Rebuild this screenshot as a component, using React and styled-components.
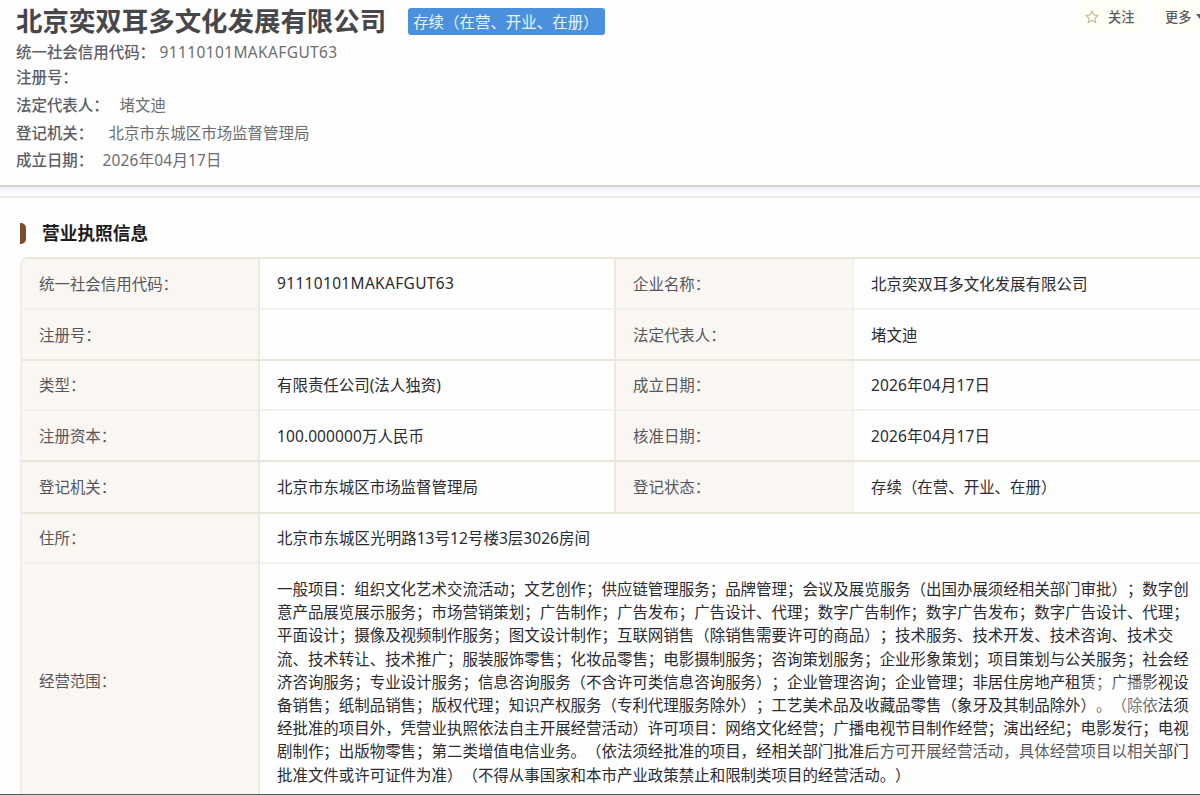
import React from "react";
import styled, { createGlobalStyle } from "styled-components";

const GlobalStyle = createGlobalStyle`
  * {
    box-sizing: border-box;
  }

  body {
    margin: 0;
    background: #fefefe;
    font-family: "Noto Sans", "Noto Sans CJK SC", sans-serif;
    font-size: 15.46px;
    color: #33343c;
    text-spacing-trim: space-all;
    overflow: hidden;
  }
`;

const Page = styled.div`
  position: relative;
  width: 1200px;
  height: 795px;
  overflow: hidden;
  border-bottom: 1px solid #58585a;
`;

const Header = styled.header`
  display: flex;
  justify-content: space-between;
  height: 187px;
  padding-left: 16px;
  border-bottom: 2px solid #d3d4cb;
`;

const TitleRow = styled.div`
  display: flex;
  align-items: center;
  height: 39px;
  padding-top: 3px;
`;

const Title = styled.h1`
  margin: 0;
  font-size: 26.45px;
  line-height: 36px;
  font-weight: 700;
  color: #47474b;
  white-space: nowrap;
`;

const Status = styled.span`
  height: 27px;
  width: 197px;
  margin-left: 21.5px;
  padding-left: 5.5px;
  border-radius: 3px;
  background: #4a90dc;
  color: #e9f8ff;
  line-height: 28px;
  white-space: nowrap;
`;

const Meta = styled.div`
  display: flex;
  height: ${(props) => props.$height}px;
  line-height: ${(props) => props.$height}px;
  color: #6c6d73;
`;

const MetaLabel = styled.span`
  width: ${(props) => props.$width}px;
  font-weight: 500;
  color: #5d5e69;
  white-space: nowrap;
`;

const Latin = styled.span`
  letter-spacing: ${(props) => props.$spacing}px;
`;

const Actions = styled.div`
  display: flex;
  height: 31px;
  font-size: 13.2px;
  font-weight: 500;
  color: #5b5a62;
  gap: 10px;
`;

const Action = styled.div`
  display: flex;
  align-items: center;
  gap: ${(props) => props.$gap}px;
  width: ${(props) => props.$width}px;
  padding: 2px 0 0 ${(props) => props.$left}px;
  background: #fffef6;
  white-space: nowrap;
  overflow: hidden;

  svg {
    flex: none;
  }
`;

const Divider = styled.div`
  height: 11px;
  background: linear-gradient(#f0f0f4, #fbfbfe 60%);
  border-bottom: 2px solid #ecece2;
`;

const Section = styled.section`
  padding: 25px 0 0 20px;
`;

const SectionTitle = styled.h2`
  display: flex;
  align-items: center;
  gap: 16px;
  margin: 0 0 13px;
  height: 21px;
  font-size: 17.7px;
  line-height: 21px;
  font-weight: 700;
  color: #1d1c1f;

  &::before {
    content: "";
    width: 6px;
    height: 21px;
    border-radius: 0 5px 5px 0;
    background: #7b4e30;
  }
`;

const Table = styled.div`
  display: grid;
  grid-template-columns: 238px 356px 238px 1fr;
  grid-template-rows: 51px 51px 50px 51px 52px 50px 240px;
  border-top: 2px solid #ebe7d9;
  border-left: 2px solid #f0eee6;
  border-top-left-radius: 8px;
  overflow: hidden;
`;

const Cell = styled.div`
  display: flex;
  align-items: center;
  padding: 0 0 1px 17px;
  border-bottom: ${(props) =>
    props.$faint ? "2px solid #f2f1eb" : "2px solid #e9e5d7"};
  white-space: nowrap;
`;

const Label = styled(Cell)`
  border-right: ${(props) =>
    props.$second ? "1px solid #edebe2" : "2px solid #ebe8dc"};
  background: #faf7f2;
  color: #56565e;
`;

const ScopeLabel = styled(Label)`
  padding-bottom: 5px;
`;

const Value = styled(Cell)`
  grid-column: ${(props) => (props.$wide ? "span 3" : "auto")};
  border-right: ${(props) => (props.$divided ? "2px solid #ebe8dc" : "none")};
  padding-left: 17px;
  color: #2a2b33;
`;

const Scope = styled(Value)`
  display: block;
  padding-top: 14px;
  line-height: 23.2px;
`;

// washed-out patches lying over the scope text
const Haze = styled.div`
  position: absolute;
  left: ${(props) => props.$left}px;
  top: ${(props) => props.$top}px;
  width: ${(props) => props.$width}px;
  height: ${(props) => props.$height}px;
  border-radius: 12px;
  background: rgba(255, 255, 255, ${(props) => props.$alpha});
  filter: blur(3px);
  pointer-events: none;
`;

const meta = [
  { label: "统一社会信用代码：", value: "91110101MAKAFGUT63", width: 143.5, height: 26, spacing: 0.4 },
  { label: "注册号：", value: "", width: 80, height: 25 },
  { label: "法定代表人：", value: "堵文迪", width: 103.5, height: 30 },
  { label: "登记机关：", value: "北京市东城区市场监督管理局", width: 92.5, height: 26 },
  { label: "成立日期：", value: "2026年04月17日", width: 86.5, height: 28, spacing: 0.2 },
];

const rows = [
  ["统一社会信用代码：", "91110101MAKAFGUT63", "企业名称：", "北京奕双耳多文化发展有限公司", 0.35],
  ["注册号：", "", "法定代表人：", "堵文迪"],
  ["类型：", "有限责任公司(法人独资)", "成立日期：", "2026年04月17日"],
  ["注册资本：", "100.000000万人民币", "核准日期：", "2026年04月17日", 0.12],
  ["登记机关：", "北京市东城区市场监督管理局", "登记状态：", "存续（在营、开业、在册）"],
];

const scope = [
  "一般项目：组织文化艺术交流活动；文艺创作；供应链管理服务；品牌管理；会议及展览服务（出国办展须经相关部门审批）；数字创",
  "意产品展览展示服务；市场营销策划；广告制作；广告发布；广告设计、代理；数字广告制作；数字广告发布；数字广告设计、代理；",
  "平面设计；摄像及视频制作服务；图文设计制作；互联网销售（除销售需要许可的商品）；技术服务、技术开发、技术咨询、技术交",
  "流、技术转让、技术推广；服装服饰零售；化妆品零售；电影摄制服务；咨询策划服务；企业形象策划；项目策划与公关服务；社会经",
  "济咨询服务；专业设计服务；信息咨询服务（不含许可类信息咨询服务）；企业管理咨询；企业管理；非居住房地产租赁；广播影视设",
  "备销售；纸制品销售；版权代理；知识产权服务（专利代理服务除外）；工艺美术品及收藏品零售（象牙及其制品除外）。（除依法须",
  "经批准的项目外，凭营业执照依法自主开展经营活动）许可项目：网络文化经营；广播电视节目制作经营；演出经纪；电影发行；电视",
  "剧制作；出版物零售；第二类增值电信业务。（依法须经批准的项目，经相关部门批准后方可开展经营活动，具体经营项目以相关部门",
  "批准文件或许可证件为准）（不得从事国家和本市产业政策禁止和限制类项目的经营活动。）",
];

const Star = () => (
  <svg width="14" height="14" viewBox="0 0 14 14" fill="#fffef6" stroke="#c3bea0" strokeWidth="1.2" strokeLinejoin="round">
    <path d="M7 .9 8.8 4.8l4.3.5-3.2 2.9.9 4.3L7 10.4l-3.8 2.1.9-4.3L.9 5.3l4.3-.5z" />
  </svg>
);

const App = () => {
  return (
    <Page>
      <GlobalStyle />
      <Header>
        <div>
          <TitleRow>
            <Title>北京奕双耳多文化发展有限公司</Title>
            <Status>存续（在营、开业、在册）</Status>
          </TitleRow>
          {meta.map((item) => (
            <Meta key={item.label} $height={item.height}>
              <MetaLabel $width={item.width}>{item.label}</MetaLabel>
              <Latin $spacing={item.spacing || 0}>{item.value}</Latin>
            </Meta>
          ))}
        </div>
        <Actions>
          <Action $width={68} $left={9} $gap={9}>
            <Star />
            关注
          </Action>
          <Action $width={46} $left={11} $gap={5}>
            更多
            <svg width="8" height="5" viewBox="0 0 8 5">
              <path d="M0 0h8L4 5z" fill="#5b5a62" />
            </svg>
          </Action>
        </Actions>
      </Header>
      <Divider />
      <Section>
        <SectionTitle>营业执照信息</SectionTitle>
        <Table>
          {rows.map(([label, value, label2, value2, spacing], index) => {
            const faint = index === 0 || index === 2;
            return (
              <React.Fragment key={label}>
                <Label $faint={faint}>{label}</Label>
                <Value $faint={faint} $divided>
                  <Latin $spacing={spacing || 0}>{value}</Latin>
                </Value>
                <Label $faint={faint} $second>
                  {label2}
                </Label>
                <Value $faint={faint}>
                  <Latin $spacing={value2.startsWith("2026") ? 0.2 : 0}>{value2}</Latin>
                </Value>
              </React.Fragment>
            );
          })}
          <Label $faint>住所：</Label>
          <Value $wide $faint>
            <Latin $spacing={0.07}>北京市东城区光明路13号12号楼3层3026房间</Latin>
          </Value>
          <ScopeLabel>经营范围：</ScopeLabel>
          <Scope $wide>
            {scope.map((line) => (
              <div key={line}>{line}</div>
            ))}
          </Scope>
        </Table>
      </Section>
      <Haze $left={1086} $top={680} $width={72} $height={34} $alpha={0.35} />
      <Haze $left={870} $top={744} $width={296} $height={16} $alpha={0.25} />
    </Page>
  );
};

export default App;
